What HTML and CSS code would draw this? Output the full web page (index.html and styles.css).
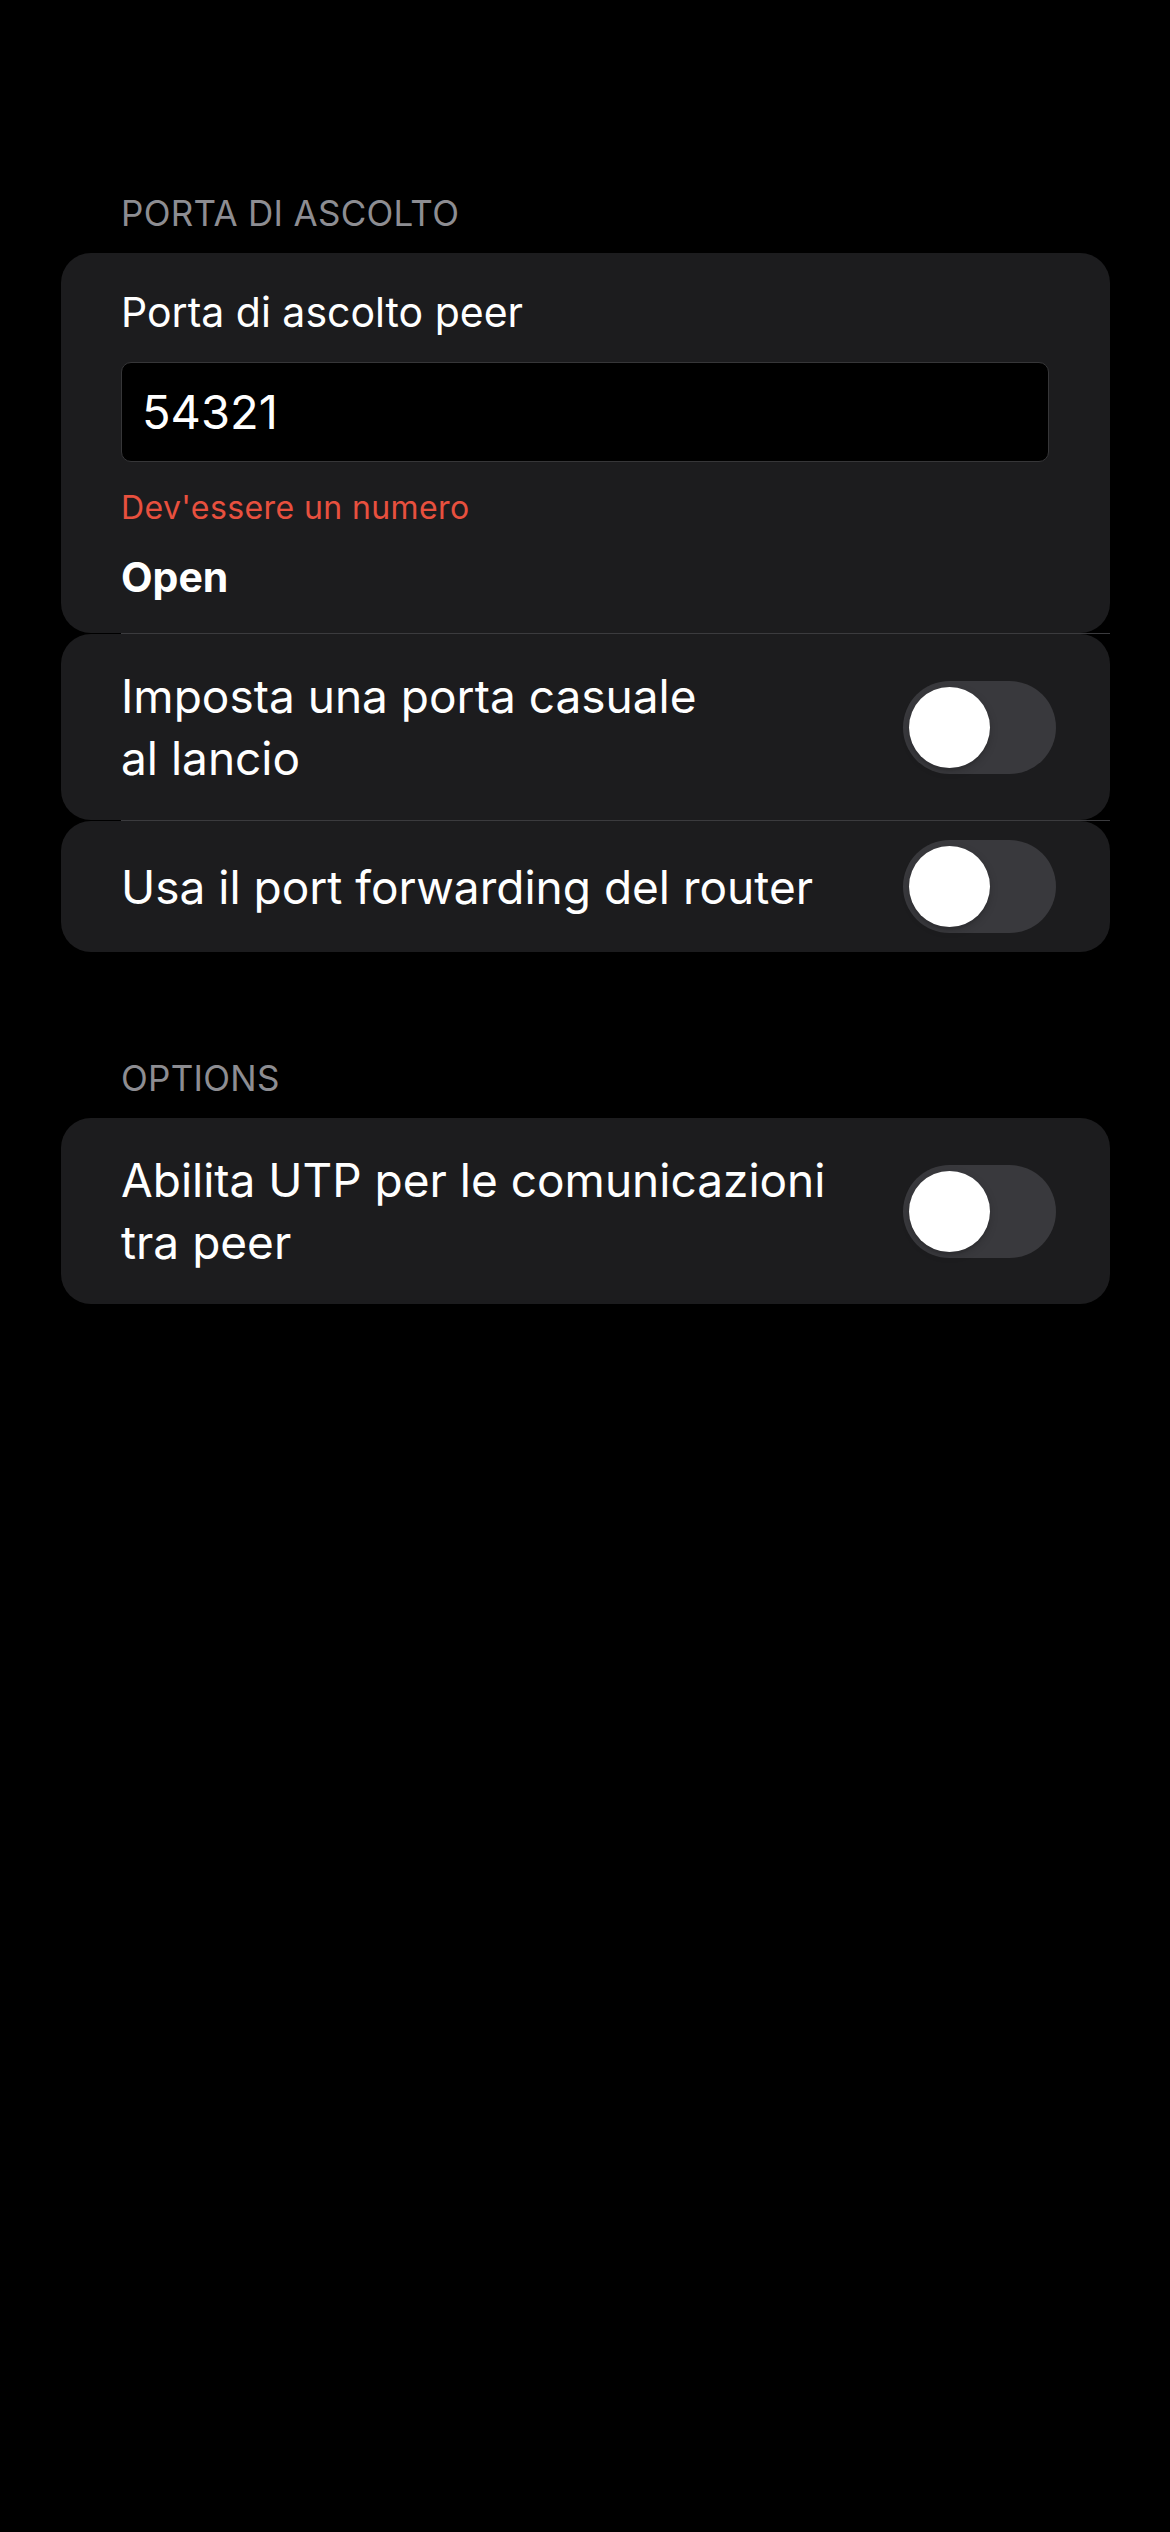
FILE: index.html
```html
<!DOCTYPE html>
<html lang="it">
<head>
<meta charset="utf-8">
<title>Impostazioni</title>
<link rel="stylesheet" href="styles.css">
</head>
<body>
<main class="page">
  <section class="group group-first">
    <h2 class="group-header">PORTA DI ASCOLTO</h2>
    <div class="card card-port">
      <div class="field-label">Porta di ascolto peer</div>
      <div class="input-box"><span class="input-value">54321</span></div>
      <div class="error-text">Dev'essere un numero</div>
      <div class="status-text">Open</div>
    </div>
    <div class="separator"></div>
    <div class="card row">
      <div class="row-text">Imposta una porta casuale<br>al lancio</div>
      <div class="switch"><div class="knob"></div></div>
    </div>
    <div class="separator"></div>
    <div class="card row row-single">
      <div class="row-text">Usa il port forwarding del router</div>
      <div class="switch"><div class="knob"></div></div>
    </div>
  </section>

  <section class="group group-options">
    <h2 class="group-header">OPTIONS</h2>
    <div class="card row">
      <div class="row-text">Abilita UTP per le comunicazioni<br>tra peer</div>
      <div class="switch"><div class="knob"></div></div>
    </div>
  </section>
</main>
</body>
</html>
```

FILE: styles.css
```css
html, body {
  margin: 0;
  padding: 0;
  background: #000000;
}

body {
  width: 1170px;
  min-height: 2532px;
  font-family: Inter, "Noto Sans", "Liberation Sans", sans-serif;
  color: #ffffff;
}

.page {
  padding: 0 60px 0 61px;
  display: flex;
  flex-direction: column;
}

.group {
  display: flex;
  flex-direction: column;
}

.group-first {
  margin-top: 192px;
}

.group-options {
  margin-top: 105px;
}

.group-header {
  margin: 0 0 19px 60px;
  font-size: 35px;
  line-height: 42px;
  font-weight: 400;
  color: #8d8d92;
  letter-spacing: 0.3px;
}

.card {
  background: #1c1c1e;
  border-radius: 30px;
}

.card-port {
  padding: 34px 61px 31px 60px;
  display: flex;
  flex-direction: column;
}

.field-label {
  font-size: 41px;
  line-height: 50px;
}

.input-box {
  margin-top: 25px;
  height: 100px;
  box-sizing: border-box;
  border: 1px solid #363638;
  border-radius: 10px;
  background: #000000;
  display: flex;
  align-items: center;
  padding-left: 20px;
}

.input-value {
  font-size: 47px;
  line-height: 58px;
}

.error-text {
  margin-top: 27px;
  font-size: 32px;
  line-height: 38px;
  letter-spacing: 0.4px;
  color: #e8503e;
}

.status-text {
  margin-top: 25px;
  font-size: 41px;
  line-height: 50px;
  font-weight: 700;
}

.separator {
  height: 1px;
  margin-left: 60px;
  background: #3b3b3e;
}

.row {
  display: flex;
  align-items: center;
  justify-content: space-between;
  padding: 31px 54px 31px 60px;
}

.row-single {
  min-height: 131px;
  box-sizing: border-box;
  padding-top: 0;
  padding-bottom: 0;
}

.row-text {
  font-size: 46px;
  line-height: 62px;
}

.switch {
  flex: none;
  width: 153px;
  height: 93px;
  border-radius: 47px;
  background: #39393d;
  display: flex;
  align-items: center;
  padding-left: 6px;
  box-sizing: border-box;
}

.knob {
  width: 81px;
  height: 81px;
  border-radius: 50%;
  background: #ffffff;
  box-shadow: 0 3px 8px rgba(0, 0, 0, 0.18), 0 3px 1px rgba(0, 0, 0, 0.06);
}
```
